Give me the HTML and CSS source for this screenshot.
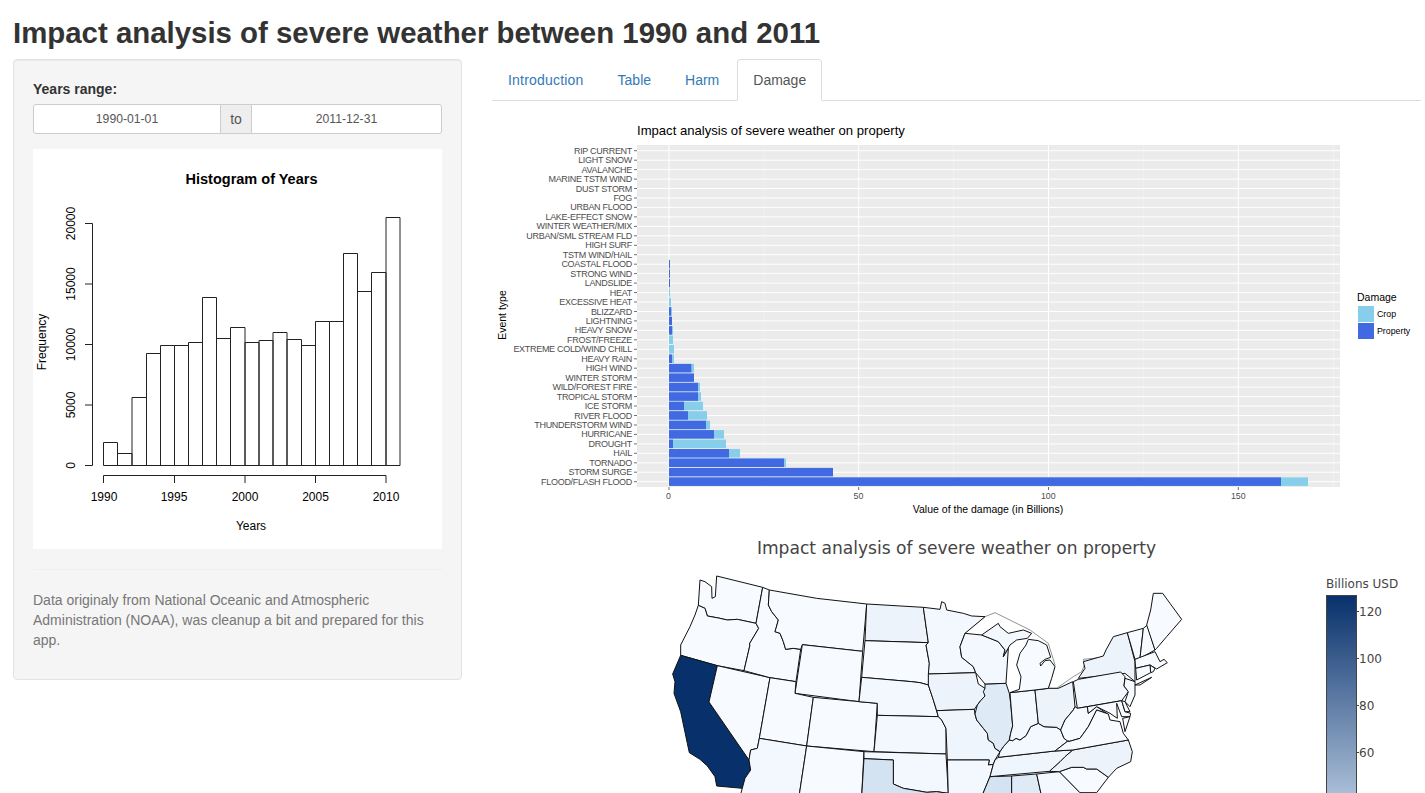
FILE: index.html
```html
<!DOCTYPE html>
<html lang="en">
<head>
<meta charset="utf-8">
<title>Impact analysis of severe weather between 1990 and 2011</title>
<link rel="stylesheet" href="styles.css">
</head>
<body>
<div class="page">
  <h1 class="page-title">Impact analysis of severe weather between 1990 and 2011</h1>
  <div class="layout">
    <aside class="sidebar">
      <div class="field-label">Years range:</div>
      <div class="range">
        <div class="range-input range-left">1990-01-01</div>
        <div class="range-addon">to</div>
        <div class="range-input range-right">2011-12-31</div>
      </div>
      <svg class="hist" viewBox="33 149 409 400" width="409" height="400">
        <rect x="33" y="149" width="409" height="400" fill="#fff"/>
        <text class="h-title" x="251.5" y="184">Histogram of Years</text>
        <g class="h-line">
          <path d="M103.5 465.5V442.5H117.5V465.5M117.5 465.5V453.5H132V465.5M132 465.5V397.5H146.5V465.5M146.5 465.5V353.5H160.5V465.5M160.5 465.5V345.5H174.5V465.5M174.5 465.5V345.5H188.5V465.5M188.5 465.5V342.5H202.5V465.5M202.5 465.5V297.5H216.5V465.5M216.5 465.5V338.5H230.5V465.5M230.5 465.5V327.5H245V465.5M245 465.5V342.5H259V465.5M259 465.5V340.5H273V465.5M273 465.5V332.5H287V465.5M287 465.5V339.5H301.5V465.5M301.5 465.5V345.5H315.5V465.5M315.5 465.5V321.5H329.5V465.5M329.5 465.5V321.5H343.5V465.5M343.5 465.5V253.5H357.5V465.5M357.5 465.5V291.5H371.5V465.5M371.5 465.5V272.5H386V465.5M386 465.5V217.5H400V465.5M103.5 465.5H400"/>
          <path d="M92.5 223.5V465.5M85 223.5H92.5M85 284H92.5M85 344.5H92.5M85 405H92.5M85 465.5H92.5"/>
          <path d="M103.5 475.5H386M103.5 475.5V483M174.5 475.5V483M245 475.5V483M315.5 475.5V483M386 475.5V483"/>
        </g>
        <g class="h-text">
          <text x="104" y="501">1990</text>
          <text x="174" y="501">1995</text>
          <text x="245" y="501">2000</text>
          <text x="315.5" y="501">2005</text>
          <text x="386" y="501">2010</text>
          <text x="251" y="530">Years</text>
          <text transform="translate(46 342) rotate(-90)">Frequency</text>
          <text transform="translate(75 223.5) rotate(-90)">20000</text>
          <text transform="translate(75 284) rotate(-90)">15000</text>
          <text transform="translate(75 344.5) rotate(-90)">10000</text>
          <text transform="translate(75 405) rotate(-90)">5000</text>
          <text transform="translate(75 465.5) rotate(-90)">0</text>
        </g>
      </svg>
      <hr class="divider">
      <p class="note">Data originaly from National Oceanic and Atmospheric Administration (NOAA), was cleanup a bit and prepared for this app.</p>
    </aside>
    <main class="main">
      <nav class="tabs">
        <a class="tab tab-wide" href="#">Introduction</a>
        <a class="tab" href="#">Table</a>
        <a class="tab" href="#">Harm</a>
        <a class="tab tab-active" href="#">Damage</a>
      </nav>
      <svg class="plot" viewBox="492 101 929 424" width="929" height="424">
        <text class="g-title" x="637" y="135">Impact analysis of severe weather on property</text>
        <rect x="637" y="145" width="703" height="342" fill="#ebebeb"/>
        <path class="g-minor" d="M763.8 145V487M953.5 145V487M1143.3 145V487M1333.5 145V487"/>
        <path class="g-major" d="M669 145V487M858.7 145V487M1048.5 145V487M1238.3 145V487M637 150.7H1340M637 160.2H1340M637 169.6H1340M637 179.1H1340M637 188.5H1340M637 198H1340M637 207.4H1340M637 216.9H1340M637 226.4H1340M637 235.8H1340M637 245.3H1340M637 254.7H1340M637 264.2H1340M637 273.6H1340M637 283.1H1340M637 292.6H1340M637 302H1340M637 311.5H1340M637 320.9H1340M637 330.4H1340M637 339.8H1340M637 349.3H1340M637 358.8H1340M637 368.2H1340M637 377.7H1340M637 387.1H1340M637 396.6H1340M637 406H1340M637 415.5H1340M637 425H1340M637 434.4H1340M637 443.9H1340M637 453.3H1340M637 462.8H1340M637 472.2H1340M637 481.7H1340"/>
        <path class="g-tick" d="M634 150.7H637M634 160.2H637M634 169.6H637M634 179.1H637M634 188.5H637M634 198H637M634 207.4H637M634 216.9H637M634 226.4H637M634 235.8H637M634 245.3H637M634 254.7H637M634 264.2H637M634 273.6H637M634 283.1H637M634 292.6H637M634 302H637M634 311.5H637M634 320.9H637M634 330.4H637M634 339.8H637M634 349.3H637M634 358.8H637M634 368.2H637M634 377.7H637M634 387.1H637M634 396.6H637M634 406H637M634 415.5H637M634 425H637M634 434.4H637M634 443.9H637M634 453.3H637M634 462.8H637M634 472.2H637M634 481.7H637M669 487V490M858.7 487V490M1048.5 487V490M1238.3 487V490"/>
        <g class="crop">
          <rect x="669" y="288.3" width="1" height="8.5"/>
          <rect x="669" y="297.8" width="2" height="8.5"/>
          <rect x="669" y="307.2" width="3" height="8.5"/>
          <rect x="669" y="326.1" width="4" height="8.5"/>
          <rect x="669" y="335.5" width="4" height="8.5"/>
          <rect x="669" y="345" width="5" height="8.5"/>
          <rect x="669" y="354.5" width="5" height="8.5"/>
          <rect x="669" y="363.9" width="25" height="8.5"/>
          <rect x="669" y="382.8" width="31" height="8.5"/>
          <rect x="669" y="392.3" width="32" height="8.5"/>
          <rect x="669" y="401.7" width="34" height="8.5"/>
          <rect x="669" y="411.2" width="38" height="8.5"/>
          <rect x="669" y="420.7" width="41" height="8.5"/>
          <rect x="669" y="430.1" width="55" height="8.5"/>
          <rect x="669" y="439.6" width="57" height="8.5"/>
          <rect x="669" y="449" width="71" height="8.5"/>
          <rect x="669" y="458.5" width="117" height="8.5"/>
          <rect x="669" y="477.4" width="639" height="8.5"/>
        </g>
        <g class="prop">
          <rect x="669" y="259.9" width="1" height="8.5"/>
          <rect x="669" y="269.3" width="1" height="8.5"/>
          <rect x="669" y="278.8" width="1" height="8.5"/>
          <rect x="669" y="307.2" width="2" height="8.5"/>
          <rect x="669" y="316.6" width="3" height="8.5"/>
          <rect x="669" y="326.1" width="3" height="8.5"/>
          <rect x="669" y="354.5" width="3" height="8.5"/>
          <rect x="669" y="363.9" width="22.3" height="8.5"/>
          <rect x="669" y="373.4" width="25" height="8.5"/>
          <rect x="669" y="382.8" width="29" height="8.5"/>
          <rect x="669" y="392.3" width="29" height="8.5"/>
          <rect x="669" y="401.7" width="15" height="8.5"/>
          <rect x="669" y="411.2" width="19" height="8.5"/>
          <rect x="669" y="420.7" width="37" height="8.5"/>
          <rect x="669" y="430.1" width="45" height="8.5"/>
          <rect x="669" y="439.6" width="4" height="8.5"/>
          <rect x="669" y="449" width="60" height="8.5"/>
          <rect x="669" y="458.5" width="115" height="8.5"/>
          <rect x="669" y="467.9" width="164" height="8.5"/>
          <rect x="669" y="477.4" width="612" height="8.5"/>
        </g>
        <g class="g-cat">
          <text x="632" y="153.7">RIP CURRENT</text>
          <text x="632" y="163.2">LIGHT SNOW</text>
          <text x="632" y="172.6">AVALANCHE</text>
          <text x="632" y="182.1">MARINE TSTM WIND</text>
          <text x="632" y="191.5">DUST STORM</text>
          <text x="632" y="201">FOG</text>
          <text x="632" y="210.4">URBAN FLOOD</text>
          <text x="632" y="219.9">LAKE-EFFECT SNOW</text>
          <text x="632" y="229.4">WINTER WEATHER/MIX</text>
          <text x="632" y="238.8">URBAN/SML STREAM FLD</text>
          <text x="632" y="248.3">HIGH SURF</text>
          <text x="632" y="257.7">TSTM WIND/HAIL</text>
          <text x="632" y="267.2">COASTAL FLOOD</text>
          <text x="632" y="276.6">STRONG WIND</text>
          <text x="632" y="286.1">LANDSLIDE</text>
          <text x="632" y="295.6">HEAT</text>
          <text x="632" y="305">EXCESSIVE HEAT</text>
          <text x="632" y="314.5">BLIZZARD</text>
          <text x="632" y="323.9">LIGHTNING</text>
          <text x="632" y="333.4">HEAVY SNOW</text>
          <text x="632" y="342.8">FROST/FREEZE</text>
          <text x="632" y="352.3">EXTREME COLD/WIND CHILL</text>
          <text x="632" y="361.8">HEAVY RAIN</text>
          <text x="632" y="371.2">HIGH WIND</text>
          <text x="632" y="380.7">WINTER STORM</text>
          <text x="632" y="390.1">WILD/FOREST FIRE</text>
          <text x="632" y="399.6">TROPICAL STORM</text>
          <text x="632" y="409">ICE STORM</text>
          <text x="632" y="418.5">RIVER FLOOD</text>
          <text x="632" y="428">THUNDERSTORM WIND</text>
          <text x="632" y="437.4">HURRICANE</text>
          <text x="632" y="446.9">DROUGHT</text>
          <text x="632" y="456.3">HAIL</text>
          <text x="632" y="465.8">TORNADO</text>
          <text x="632" y="475.2">STORM SURGE</text>
          <text x="632" y="484.7">FLOOD/FLASH FLOOD</text>
        </g>
        <g class="g-val">
          <text x="668.5" y="499">0</text>
          <text x="858.5" y="499">50</text>
          <text x="1048.3" y="499">100</text>
          <text x="1238.3" y="499">150</text>
        </g>
        <text class="g-axis g-center" x="988" y="513">Value of the damage (in Billions)</text>
        <text class="g-axis g-center" transform="translate(506 315) rotate(-90)">Event type</text>
        <text class="g-axis" x="1357" y="301">Damage</text>
        <rect x="1358" y="306" width="16" height="16" fill="#87ceeb"/>
        <rect x="1358" y="323" width="16" height="16" fill="#4169e1"/>
        <text class="g-key" x="1377" y="317">Crop</text>
        <text class="g-key" x="1377" y="334">Property</text>
      </svg>
      <svg class="map" viewBox="492 525 929 268" width="929" height="268">
        <text class="m-title" x="956.5" y="554">Impact analysis of severe weather on property</text>
        <g class="west" transform="translate(650 530) scale(.33333)">
          <path class="s0" d="M200 138L338 172L318 280L262 268L232 270L205 264L172 258L165 235L145 226L150 150L165 155L185 170L186 205L196 200Z"/>
          <path class="s0" d="M145 226L165 235L172 258L205 264L232 270L262 268L318 280L326 295L298 342L300 345L282 422L202 407L92 376L92 345L120 290L135 255Z"/>
          <path class="s-ca" d="M92 376L202 407L177 516L297 690L302 720L285 745L278 775L200 768L195 740L172 708L150 688L118 668L112 640L92 545L72 490L75 455L68 432Z"/>
          <path class="s0" d="M202 407L360 443L328 625L322 655L302 660L297 690L177 516Z"/>
          <path class="s0" d="M338 172L358 180L355 225L365 245L385 270L378 295L375 305L390 310L400 335L407 358L430 355L452 358L438 455L360 443L282 422L300 345L298 342L326 295L318 280Z"/>
          <path class="s0" d="M358 180L500 205L650 222L638 364L457 344L452 358L430 355L407 358L400 335L390 310L375 305L378 295L385 270L365 245L355 225Z"/>
          <path class="s0" d="M457 344L638 364L627 515L435 490Z"/>
          <path class="s0" d="M360 443L438 455L435 490L490 502L470 648L328 625Z"/>
          <path class="s0" d="M490 502L682 520L672 665L470 648Z"/>
          <path class="s1" d="M328 625L470 648L447 800L270 800L285 745L302 720L297 690L302 660L322 655Z"/>
          <path class="s0" d="M470 648L642 665L635 800L447 800Z"/>
          <path class="s3" d="M650 222L820 232L835 338L645 332Z"/>
          <path class="s0" d="M645 332L835 338L828 345L838 400L835 465L810 458L785 455L635 442Z"/>
          <path class="s1" d="M635 442L785 455L810 458L835 465L850 510L865 560L682 556L682 520L627 515Z"/>
          <path class="s1" d="M682 556L865 560L875 570L888 595L888 672L672 665Z"/>
          <path class="s1" d="M642 665L888 672L895 790L860 785L830 787L790 780L760 775L730 762L730 690L642 686Z"/>
          <path class="s-tx" d="M642 686L730 690L730 762L760 775L790 780L830 787L860 785L895 790L900 800L635 800Z"/>
        </g>
        <g class="east" transform="translate(940 570) scale(.33333)">
          <path class="s-lake" d="M80 185L135 140L165 128L270 180L325 220L345 285L325 355"/>
          <path class="s-lake" d="M325 355L350 355L400 320L425 305L435 280L430 268L490 262L500 240"/>
          <path class="s1" d="M-50 112L0 118L5 95L15 100L20 120L70 130L95 138L135 140L75 190L60 230L65 262L100 290L107 308L-35 312L-32 280L-42 225L-35 218Z"/>
          <path class="s3" d="M-35 312L107 308L115 342L135 355L135 378L122 392L112 405L103 418L-10 422L-20 390L-35 345Z"/>
          <path class="s2" d="M-10 422L103 418L105 432L110 450L130 475L142 490L145 510L160 520L165 535L180 545L165 570L160 583L145 585L148 570L22 570L18 475L5 450L-5 440Z"/>
          <path class="s1" d="M22 570L148 570L145 585L160 583L150 620L125 680L25 680Z"/>
          <path class="s-ms" d="M150 620L215 618L215 680L125 680Z"/>
          <path class="s4" d="M215 618L290 612L305 680L215 680Z"/>
          <path class="s1" d="M290 612L358 605L420 668L420 680L305 680Z"/>
          <path class="s0" d="M358 605L395 592L430 592L440 597L470 597L505 622L470 668L420 668Z"/>
          <path class="s3" d="M565 510L577 545L572 575L530 595L505 622L470 597L440 597L430 592L395 592L358 605L328 604L360 575L375 560L398 540Z"/>
          <path class="s2" d="M175 562L345 543L398 540L375 560L360 575L328 604L150 620L160 583L165 570Z"/>
          <path class="s1" d="M180 545L190 530L208 510L218 512L228 505L240 510L258 497L272 470L295 460L312 470L350 472L362 480L372 505L385 512L345 543L175 562Z"/>
          <path class="s4" d="M135 342L198 340L208 370L212 400L218 468L212 490L208 510L190 530L180 545L165 535L160 520L145 510L142 490L130 475L110 450L105 432L112 405L122 392L135 378L130 365L135 355Z"/>
          <path class="s1" d="M210 368L285 360L295 460L272 470L258 497L240 510L228 505L218 512L208 510L212 490L218 468Z"/>
          <path class="s3" d="M285 360L325 355L355 355L398 335L405 410L400 420L375 450L362 480L350 472L312 470L295 460Z"/>
          <path class="s1" d="M75 190L125 195L175 215L195 240L190 260L205 235L198 340L135 342L107 308L100 290L65 262L60 230Z"/>
          <path class="s1" d="M125 195L175 160L180 170L205 190L250 180L275 190L262 205L230 210L210 225L190 260L195 240L175 215Z"/>
          <path class="s0" d="M210 368L238 358L243 320L230 285L240 250L258 225L265 208L295 212L320 225L332 262L315 268L300 280L302 288L315 272L330 270L345 290L335 325L325 355L285 360Z"/>
          <path class="s3" d="M415 325L435 295L430 275L490 258L498 240L520 200L562 188L585 275L585 335L555 310Z"/>
          <path class="s1" d="M400 335L415 328L542 306L555 320L552 348L565 365L545 392L412 415Z"/>
          <path class="s0" d="M555 325L585 335L585 375L570 410L555 395L565 365L552 348Z"/>
          <path class="s0" d="M405 410L412 415L442 410L445 430L470 410L500 430L470 420L445 470L420 505L385 515L372 505L362 480L375 450L400 420Z"/>
          <path class="s0" d="M385 515L420 505L445 470L470 420L505 432L510 450L540 455L550 490L565 510L398 540L345 543L385 512Z"/>
          <path class="s0" d="M442 410L545 392L555 425L572 430L570 440L545 440L530 400L532 445L510 430L480 415L470 410L445 430Z"/>
          <path class="s0" d="M545 392L555 395L570 425L555 425Z"/>
          <path class="s0" d="M555 485L548 445L570 440Z"/>
          <path class="s0" d="M562 188L610 175L600 265L585 268Z"/>
          <path class="s0" d="M610 175L622 165L645 240L600 265Z"/>
          <path class="s0" d="M620 165L632 120L640 70L668 70L690 100L725 148L680 200L650 235L645 240Z"/>
          <path class="s0" d="M585 268L645 245L660 275L672 268L682 278L650 297L630 285L587 295Z"/>
          <path class="s0" d="M630 285L645 295L640 305L632 308Z"/>
          <path class="s0" d="M587 295L630 285L632 308L590 330Z"/>
          <path class="s0" d="M585 345L635 322L600 345Z"/>
        </g>
        <defs>
          <linearGradient id="blues" x1="0" y1="0" x2="0" y2="1">
            <stop offset="0" stop-color="#08306b"/>
            <stop offset="1" stop-color="#aec2da"/>
          </linearGradient>
        </defs>
        <text class="m-label" x="1326" y="588">Billions USD</text>
        <rect class="m-bar" x="1326.5" y="595.5" width="30" height="205" fill="url(#blues)"/>
        <path class="m-tick" d="M1357 611.5H1359M1357 658.5H1359M1357 705.5H1359M1357 752.5H1359"/>
        <g class="m-val">
          <text x="1359" y="616">120</text>
          <text x="1359" y="663">100</text>
          <text x="1359" y="710">80</text>
          <text x="1359" y="757">60</text>
        </g>
      </svg>
    </main>
  </div>
</div>
</body>
</html>
```
FILE: styles.css
```css
html, body {
  margin: 0;
  padding: 0;
  background: #fff;
  overflow: hidden;
}
body {
  font-family: "Liberation Sans", Arial, sans-serif;
  font-size: 14px;
  line-height: 20px;
  color: #333;
}
.page {
  padding: 16px 4px 0 13px;
}
.page-title {
  margin: 0 0 10px;
  font-size: 29.4px;
  line-height: 33px;
  font-weight: 700;
  color: #333;
}
.layout {
  display: flex;
  gap: 30px;
  align-items: flex-start;
}
.sidebar {
  flex: 0 0 449px;
  box-sizing: border-box;
  padding: 19px;
  background: #f5f5f5;
  border: 1px solid #e3e3e3;
  border-radius: 4px;
  box-shadow: inset 0 1px 1px rgba(0,0,0,.05);
}
.field-label {
  font-weight: 700;
  margin-bottom: 5px;
}
.range {
  display: flex;
  height: 30px;
  margin-bottom: 15px;
}
.range-input {
  box-sizing: border-box;
  background: #fff;
  border: 1px solid #ccc;
  font-size: 12.2px;
  line-height: 28px;
  text-align: center;
  color: #555;
}
.range-left {
  flex: 0 0 188px;
  border-radius: 3px 0 0 3px;
}
.range-right {
  flex: 1;
  border-radius: 0 3px 3px 0;
}
.range-addon {
  flex: 0 0 30px;
  box-sizing: border-box;
  background: #eee;
  border-bottom: 1px solid #ccc;
  border-top: 1px solid #ccc;
  line-height: 28px;
  text-align: center;
  color: #555;
}
.hist {
  display: block;
}
.h-title {
  font-size: 14.5px;
  font-weight: 700;
  text-anchor: middle;
  fill: #000;
}
.h-line path {
  fill: none;
  stroke: #222;
  stroke-width: 1;
}
.h-text text {
  font-size: 12px;
  text-anchor: middle;
  fill: #000;
}
.divider {
  margin: 20px 0;
  border: 0;
  border-top: 1px solid #eee;
}
.note {
  margin: 0 0 10px;
  color: #777;
}
.main {
  flex: 1;
  min-width: 0;
}
.tabs {
  display: flex;
  gap: 2px;
  height: 41px;
  border-bottom: 1px solid #ddd;
}
.tab {
  box-sizing: border-box;
  height: 42px;
  padding: 10px 15px;
  border: 1px solid transparent;
  border-radius: 4px 4px 0 0;
  color: #337ab7;
  text-decoration: none;
}
.tab-wide {
  letter-spacing: .2px;
}
.tab-active {
  color: #555;
  background: #fff;
  border-color: #ddd #ddd #fff;
}
.plot, .map {
  display: block;
}
.g-title {
  font-size: 13.1px;
  fill: #000;
}
.g-minor {
  fill: none;
  stroke: #f5f5f5;
  stroke-width: .6;
}
.g-major {
  fill: none;
  stroke: #fff;
  stroke-width: 1;
}
.g-tick {
  fill: none;
  stroke: #333;
  stroke-width: .7;
}
.crop rect {
  fill: #87ceeb;
}
.prop rect {
  fill: #4169e1;
}
.g-cat text {
  font-size: 9px;
  letter-spacing: -.3px;
  text-anchor: end;
  fill: #4d4d4d;
}
.g-val text {
  font-size: 8.8px;
  text-anchor: middle;
  fill: #4d4d4d;
}
.g-axis {
  font-size: 10.5px;
  fill: #000;
}
.g-center {
  text-anchor: middle;
}
.g-key {
  font-size: 8.8px;
  fill: #000;
}
.m-title {
  font-family: "DejaVu Sans", Verdana, sans-serif;
  font-size: 17.1px;
  text-anchor: middle;
  fill: #444;
}
.m-label, .m-val text {
  font-family: "DejaVu Sans", Verdana, sans-serif;
  fill: #444;
}
.m-label {
  font-size: 12px;
}
.m-val text {
  font-size: 12px;
}
.m-bar {
  stroke: #444;
  stroke-width: 1;
}
.m-tick {
  fill: none;
  stroke: #444;
  stroke-width: 1;
}
.west path, .east path {
  stroke: #111;
  stroke-width: 3;
  stroke-linejoin: round;
}
.s0 { fill: #f7fbff; }
.s1 { fill: #f3f8fe; }
.s2 { fill: #eff5fc; }
.s3 { fill: #ecf3fa; }
.s4 { fill: #dfeaf7; }
.s-ca { fill: #08306b; }
.s-tx { fill: #d3e3f2; }
.s-ms { fill: #d3e3f2; }
.east .s-lake {
  fill: none;
  stroke: #777;
  stroke-width: 2.4;
}
```
